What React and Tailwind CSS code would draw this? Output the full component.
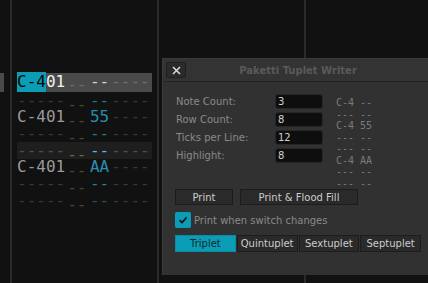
import React from "react";

const TEAL = "#0a9db5";

// pattern rows for the visible track
const rows = [
  { note: "C-401", pan: "--", cursor: true },
  { note: null, pan: "--", panColor: "#23788f" },
  { note: "C-401", pan: "55", panColor: "#2a8cae" },
  { note: null, pan: "--", panColor: "#23788f" },
  { note: null, pan: "--", panColor: "#4cc0e0", hl: true },
  { note: "C-401", pan: "AA", panColor: "#2a8cae" },
  { note: null, pan: "--", panColor: "#23809c" },
  { note: null, pan: "--", panColor: "#1c5466" },
];

const preview = ["C-4 --", "--- --", "C-4 55", "--- --", "--- --", "C-4 AA", "--- --", "--- --"];

const fields = [
  ["Note Count:", "3"],
  ["Row Count:", "8"],
  ["Ticks per Line:", "12"],
  ["Highlight:", "8"],
];

const tabs = ["Triplet", "Quintuplet", "Sextuplet", "Septuplet"];

const mono = { fontFamily: '"DejaVu Sans Mono", monospace' };

function PatternRow({ row }) {
  if (row.cursor) {
    return (
      <div className="flex items-center h-[19.6px] w-[135px] bg-[#4a4a4a] whitespace-pre leading-none">
        <span className="bg-[#0a9db5] text-[#050505] py-[2px]">C-4</span>
        <span className="text-[#f2f2f2]">01</span>
        <span className="ml-[2px] text-[#6e6e6e] translate-y-[3px]">--</span>
        <span className="ml-[3.5px] text-[#d4d4d4]">--</span>
        <span className="ml-[2px] text-[#6e6e6e]">----</span>
      </div>
    );
  }
  return (
    <div
      className={`flex items-center h-[16.7px] w-[135px] whitespace-pre leading-none ${
        row.hl ? "bg-[#1e1e1e]" : ""
      }`}
    >
      {row.note ? (
        <span className="text-[#9a9a9a]">{row.note}</span>
      ) : (
        <span className={row.hl ? "text-[#4e4e4e]" : "text-[#383838]"}>-----</span>
      )}
      <span
        className={`ml-[2px] translate-y-[4px] ${row.hl ? "text-[#6c6a2c]" : "text-[#4a4826]"}`}
      >
        --
      </span>
      <span className="ml-[3.5px]" style={{ color: row.panColor }}>
        {row.pan}
      </span>
      <span className={`ml-[2px] ${row.hl ? "text-[#4e4e4e]" : "text-[#383838]"}`}>----</span>
    </div>
  );
}

export default function App() {
  return (
    <div className="relative w-[428px] h-[283px] overflow-hidden bg-[#111111]">
      {/* pattern editor tracks */}
      <div className="flex h-full text-[16px]" style={mono}>
        <div className="w-[10px] overflow-hidden flex flex-col items-end pt-[72.7px]">
          <div className="h-[19.6px] w-[4px] self-start bg-[#4a4a4a]" />
        </div>
        <div className="w-[2px] bg-[#2a2a2a]" />
        <div className="w-[145px] pl-[5px] pt-[72.7px] flex flex-col">
          {rows.map((r, i) => (
            <PatternRow key={i} row={r} />
          ))}
        </div>
        <div className="w-[2px] bg-[#2a2a2a]" />
        <div className="w-[145px]" />
        <div className="w-[2px] bg-[#2a2a2a]" />
        <div className="flex-1" />
      </div>

      {/* tuplet writer dialog */}
      <div
        className="absolute left-[162px] top-[58px] w-[271px] h-[217px] bg-[#313131] border-t border-l border-[#3a3a3a] text-[10px] flex flex-col"
        style={{ fontFamily: '"DejaVu Sans", sans-serif' }}
      >
        <div className="grid grid-cols-[1fr_auto_1fr] items-center h-[23px] border-b border-[#232323] bg-[#333333]">
          <div className="pl-[3px]">
            <button className="w-[20px] h-[16px] flex items-center justify-center bg-[#2b2b2b] border border-[#1f1f1f] rounded-[2px]">
              <svg width="9" height="9" viewBox="0 0 9 9">
                <path d="M1 1L8 8M8 1L1 8" stroke="#dcdcdc" strokeWidth="1.5" />
              </svg>
            </button>
          </div>
          <div className="font-bold text-[#5a5a5a]">Paketti Tuplet Writer</div>
          <div />
        </div>

        <div className="px-3 pt-3 flex flex-col">
          <div className="flex items-start h-[95px]">
            <div className="grid grid-cols-[100px_48px] gap-y-[3px]">
              {fields.map(([label, value]) => (
                <React.Fragment key={label}>
                  <div className="h-[15px] flex items-center pl-px text-[#8a8a8a]">{label}</div>
                  <div className="h-[15px] flex items-center px-[2px] bg-[#0e0e0e] border border-[#262626] rounded-[3px] text-[#d0d0d0]">
                    {value}
                  </div>
                </React.Fragment>
              ))}
            </div>
            <div className="ml-[13px] mt-[3px] flex flex-col text-[10px] leading-[11.5px] text-[#7a7a7a] whitespace-pre" style={mono}>
              {preview.map((p, i) => (
                <div key={i}>{p}</div>
              ))}
            </div>
          </div>

          <div className="flex gap-[7px] h-[16px]">
            <button className="w-[58px] h-full bg-[#2a2a2a] border border-[#1c1c1c] text-[#cccccc]">Print</button>
            <button className="w-[118px] h-full bg-[#2a2a2a] border border-[#1c1c1c] text-[#cccccc]">
              Print &amp; Flood Fill
            </button>
          </div>

          <div className="flex items-center gap-[3px] h-[16px] mt-[7px]">
            <div className="w-[16px] h-[16px] rounded-[2px] flex items-center justify-center" style={{ background: TEAL }}>
              <svg width="10" height="10" viewBox="0 0 10 10">
                <path d="M1.5 5.2L4 7.6L8.6 2.4" stroke="#101010" strokeWidth="1.6" fill="none" />
              </svg>
            </div>
            <span className="text-[#8a8a8a]">Print when switch changes</span>
          </div>

          <div className="grid grid-cols-4 gap-px h-[16px] mt-[7px]">
            {tabs.map((t, i) => (
              <button
                key={t}
                className={`h-full border ${
                  i === 0
                    ? "bg-[#0a9db5] border-[#0b8aa0] text-[#0c2a30]"
                    : "bg-[#2a2a2a] border-[#1c1c1c] text-[#cccccc]"
                }`}
              >
                {t}
              </button>
            ))}
          </div>
        </div>
      </div>
    </div>
  );
}
